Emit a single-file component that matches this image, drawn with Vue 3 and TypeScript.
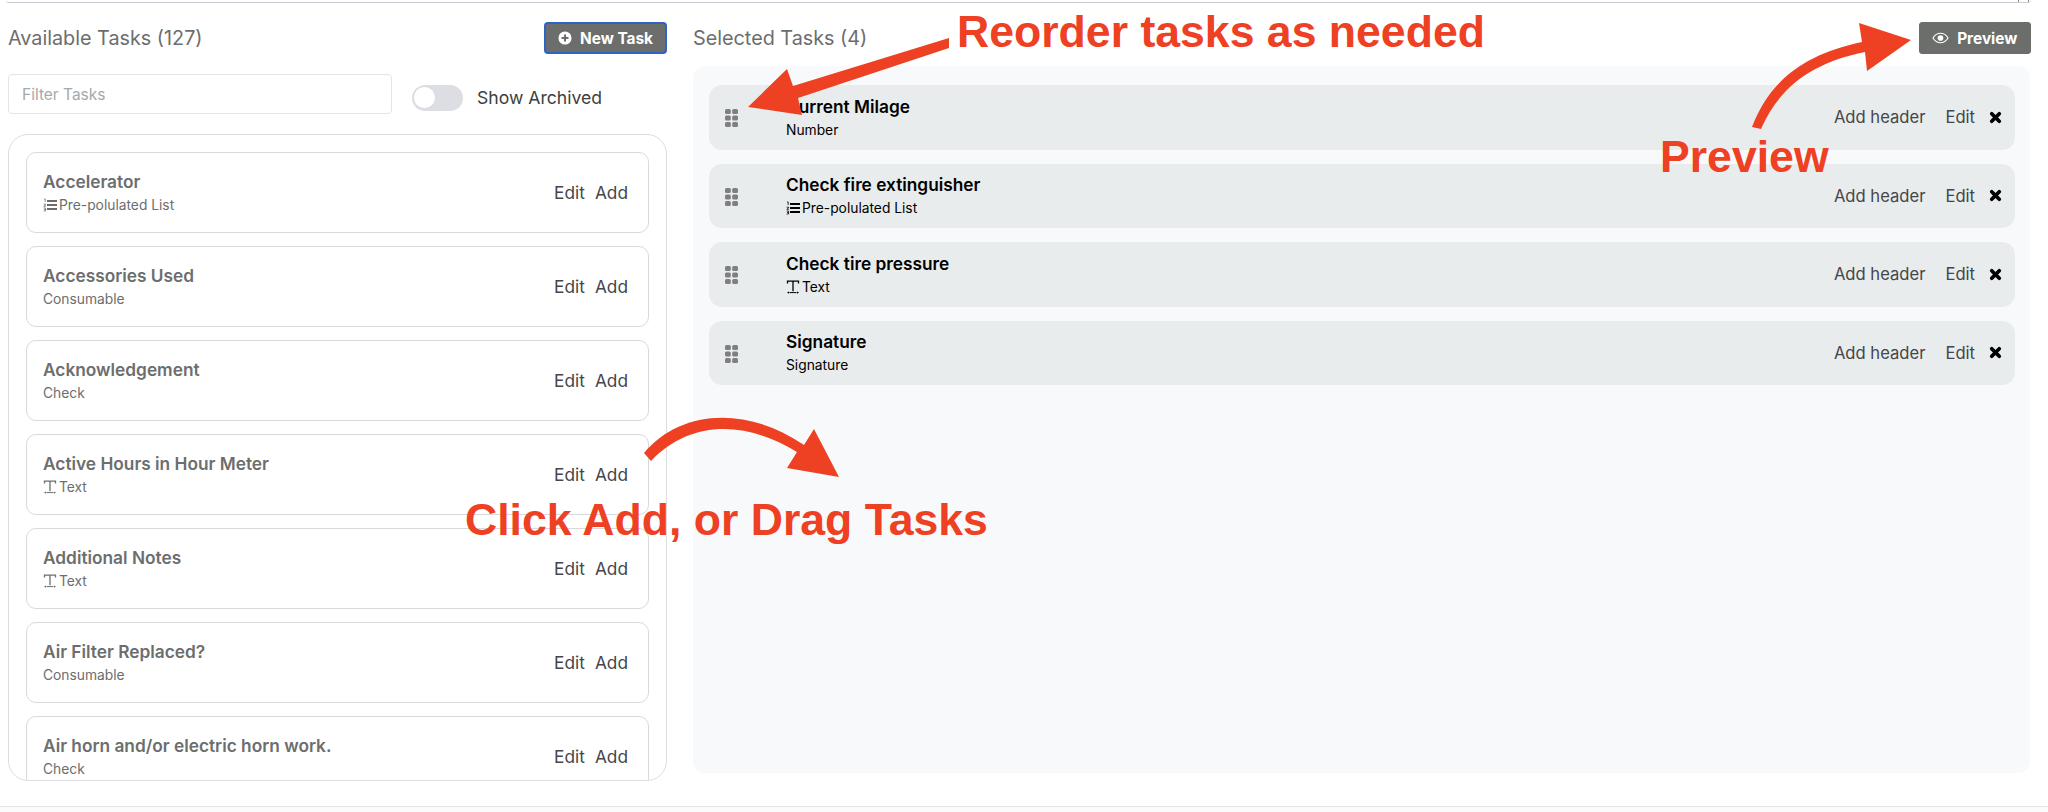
<script setup lang="ts">
interface Task { name: string; kind: string; icon?: 'list' | 'text' }

const available: Task[] = [
  { name: 'Accelerator', kind: 'Pre-polulated List', icon: 'list' },
  { name: 'Accessories Used', kind: 'Consumable' },
  { name: 'Acknowledgement', kind: 'Check' },
  { name: 'Active Hours in Hour Meter', kind: 'Text', icon: 'text' },
  { name: 'Additional Notes', kind: 'Text', icon: 'text' },
  { name: 'Air Filter Replaced?', kind: 'Consumable' },
  { name: 'Air horn and/or electric horn work.', kind: 'Check' }
]

const selected: Task[] = [
  { name: 'Current Milage', kind: 'Number' },
  { name: 'Check fire extinguisher', kind: 'Pre-polulated List', icon: 'list' },
  { name: 'Check tire pressure', kind: 'Text', icon: 'text' },
  { name: 'Signature', kind: 'Signature' }
]
</script>

<template>
  <div class="page">
    <div class="topline"><span class="topnub"></span></div>
    <div class="columns">
      <section class="left">
        <header class="head">
          <h2>Available Tasks (127)</h2>
          <button class="btn focus">
            <svg class="btn-ico" viewBox="0 0 16 16"><circle cx="8" cy="8" r="7.5" fill="#fff" /><path d="M8 4v8M4 8h8" stroke="#6c6e6c" stroke-width="2.4" /></svg>
            New Task
          </button>
        </header>
        <div class="filters">
          <input class="filter" placeholder="Filter Tasks" />
          <span class="toggle"><span class="knob"></span></span>
          <span class="archived">Show Archived</span>
        </div>
        <div class="list">
          <article v-for="t in available" :key="t.name" class="card">
            <div class="info">
              <div class="name">{{ t.name }}</div>
              <div class="kind">
                <svg v-if="t.icon === 'list'" class="kind-ico" viewBox="0 0 14 14"><path d="M4 3h10M4 7h10M4 11h10" stroke="currentColor" stroke-width="1.8" /><path d="M1 1h1.2v3M.6 6.2h2v.9l-1.8 1.2h2M.6 10h2v3H.6M1 11.5h1.6" stroke="currentColor" stroke-width=".8" fill="none" /></svg>
                <svg v-if="t.icon === 'text'" class="kind-ico" viewBox="0 0 14 14"><path d="M1.5 3.5V1.2h11v2.3M7 1.2v10" stroke="currentColor" stroke-width="1.3" fill="none" /><path d="M3.5 12.6h7" stroke="currentColor" stroke-width="1" /><path d="M1 12.6l2-1.2v2.4zM13 12.6l-2-1.2v2.4z" fill="currentColor" /></svg>
                {{ t.kind }}
              </div>
            </div>
            <div class="actions">
              <span>Edit</span>
              <span>Add</span>
            </div>
          </article>
        </div>
      </section>

      <section class="right">
        <header class="head">
          <h2>Selected Tasks (4)</h2>
          <button class="btn preview">
            <svg class="btn-ico eye" viewBox="0 0 18 12"><path d="M1 6c2-3.2 4.8-5 8-5s6 1.8 8 5c-2 3.2-4.8 5-8 5S3 9.2 1 6z" fill="none" stroke="#fff" stroke-width="1.2" /><circle cx="9" cy="6" r="3" fill="#fff" /></svg>
            Preview
          </button>
        </header>
        <div class="selected">
          <article v-for="t in selected" :key="t.name" class="row">
            <svg class="grip" viewBox="0 0 13 18"><g fill="#7d7f80"><rect x="0" y="0" width="5.8" height="5" rx="1.5" /><rect x="7.2" y="0" width="5.8" height="5" rx="1.5" /><rect x="0" y="6.5" width="5.8" height="5" rx="1.5" /><rect x="7.2" y="6.5" width="5.8" height="5" rx="1.5" /><rect x="0" y="13" width="5.8" height="5" rx="1.5" /><rect x="7.2" y="13" width="5.8" height="5" rx="1.5" /></g></svg>
            <div class="info">
              <div class="name">{{ t.name }}</div>
              <div class="kind">
                <svg v-if="t.icon === 'list'" class="kind-ico" viewBox="0 0 14 14"><path d="M4 3h10M4 7h10M4 11h10" stroke="currentColor" stroke-width="1.8" /><path d="M1 1h1.2v3M.6 6.2h2v.9l-1.8 1.2h2M.6 10h2v3H.6M1 11.5h1.6" stroke="currentColor" stroke-width=".8" fill="none" /></svg>
                <svg v-if="t.icon === 'text'" class="kind-ico" viewBox="0 0 14 14"><path d="M1.5 3.5V1.2h11v2.3M7 1.2v10" stroke="currentColor" stroke-width="1.3" fill="none" /><path d="M3.5 12.6h7" stroke="currentColor" stroke-width="1" /><path d="M1 12.6l2-1.2v2.4zM13 12.6l-2-1.2v2.4z" fill="currentColor" /></svg>
                {{ t.kind }}
              </div>
            </div>
            <div class="row-actions">
              <span>Add header</span>
              <span>Edit</span>
              <svg class="close" viewBox="0 0 12 12"><path d="M2.5 2.5l7 7M9.5 2.5l-7 7" stroke="#000" stroke-width="3.4" stroke-linecap="round" /></svg>
            </div>
          </article>
        </div>
      </section>
    </div>
    <div class="footer"></div>

    <svg class="arrows" viewBox="0 0 2048 812">
      <g fill="#ee4023">
        <path d="M949 38L949 48L798 98L802 115L748 107L787 69L793 86Z" />
        <path d="M1752 127C1770 80 1805 54 1862 42L1859 23L1911 40L1867 71L1865 52C1815 62 1780 85 1761 129Z" />
        <path d="M644 453C680 410 745 405 804 445L814 429L839 477L787 468L797 452C745 420 690 420 651 461Z" />
      </g>
    </svg>
    <span class="note note-reorder">Reorder tasks as needed</span>
    <span class="note note-preview">Preview</span>
    <span class="note note-click">Click Add, or Drag Tasks</span>
  </div>
</template>

<style>
html, body { margin: 0; background: #fff; }
</style>

<style scoped>
.page {
  position: relative;
  width: 2048px;
  height: 812px;
  overflow: hidden;
  display: flex;
  flex-direction: column;
  font-family: Inter, "Liberation Sans", sans-serif;
  background: #fff;
}
.topline {
  position: relative;
  height: 3px;
  margin: 0 17px 0 6px;
  border-bottom: 1.5px solid #c9cbd3;
  border-radius: 0 0 3px 3px;
  box-sizing: border-box;
}
.topnub {
  position: absolute;
  right: 2px;
  top: 0;
  width: 9px;
  height: 2px;
  border-left: 1px solid #888;
  border-right: 1px solid #888;
}
.columns {
  flex: 1;
  display: flex;
  padding: 19px 18px 0 8px;
  gap: 26px;
  min-height: 0;
}
.left { width: 659px; flex: none; display: flex; flex-direction: column; }
.right { flex: 1; min-width: 0; display: flex; flex-direction: column; }
.head {
  height: 32px;
  display: flex;
  align-items: center;
  justify-content: space-between;
}
h2 {
  margin: 0;
  font-size: 19.8px;
  font-weight: 400;
  color: #6c6e6e;
}
.btn {
  height: 32px;
  box-sizing: border-box;
  display: flex;
  align-items: center;
  justify-content: center;
  gap: 8px;
  border: 1px solid #6c6e6c;
  border-radius: 3px;
  background: #6c6e6c;
  color: #fff;
  font: 700 15.4px Inter, "Liberation Sans", sans-serif;
}
.focus { width: 123px; border: 2px solid #2e62c4; border-radius: 4px; }
.preview { width: 112.5px; margin-right: -1px; }
.btn-ico { width: 14px; height: 14px; }
.eye { width: 17px; height: 12px; }
.filters {
  display: flex;
  align-items: center;
  margin-top: 20px;
  height: 40px;
}
.filter {
  width: 384px;
  height: 40px;
  box-sizing: border-box;
  padding: 0 13px;
  border: 1px solid #e2e4ea;
  border-radius: 4px;
  font: 400 15.5px Inter, "Liberation Sans", sans-serif;
  outline: none;
}
.filter::placeholder { color: #a6a8ad; opacity: 1; }
.toggle {
  width: 51px;
  height: 26px;
  margin: 7px 0 0 20px;
  background: #dcdee3;
  border-radius: 13px;
  display: flex;
  align-items: center;
  padding-left: 2px;
  box-sizing: border-box;
}
.knob { width: 21px; height: 21px; border-radius: 50%; background: #fff; }
.archived {
  margin: 7px 0 0 14px;
  font-size: 17.6px;
  color: #3c3e40;
}
.list {
  margin-top: 20px;
  height: 647px;
  box-sizing: border-box;
  padding: 17px 17px 0;
  border: 1px solid #dcdde0;
  border-radius: 20px;
  overflow: hidden;
  display: flex;
  flex-direction: column;
  gap: 13px;
}
.card {
  flex: none;
  height: 81px;
  box-sizing: border-box;
  border: 1px solid #d8d9dc;
  border-radius: 10px;
  padding: 0 17px 0 16px;
  display: flex;
  align-items: center;
  justify-content: space-between;
}
.card .info { color: #6c6e6e; }
.info { display: flex; flex-direction: column; gap: 4px; }
.row .info { padding-top: 1px; }
.name { font-size: 17.3px; font-weight: 600; line-height: 20px; }
.kind {
  display: flex;
  align-items: center;
  gap: 2px;
  font-size: 13.8px;
  line-height: 18px;
}
.kind-ico { width: 14px; height: 14px; }
.actions { display: flex; gap: 10px; font-size: 17.3px; color: #44464a; padding-right: 3px; }
.selected {
  margin-top: 12px;
  height: 707px;
  box-sizing: border-box;
  padding: 19px 15px 0 16px;
  background: #f8f9fb;
  border-radius: 12px;
  display: flex;
  flex-direction: column;
  gap: 14px;
}
.row {
  flex: none;
  height: 64.5px;
  box-sizing: border-box;
  padding: 0 13px 0 16px;
  background: #e9ecec;
  border-radius: 13px;
  display: flex;
  align-items: center;
  color: #000;
}
.grip { width: 13px; height: 18px; margin: 2px 48px 0 0; }
.row-actions {
  margin-left: auto;
  display: flex;
  align-items: center;
  gap: 20px;
  font-size: 16.6px;
  color: #44464a;
}
.close { width: 13px; height: 13px; margin-left: -6px; }
.footer {
  height: 5px;
  background: #fbfbfc;
  border-top: 1.5px solid #e4e5e8;
}
.arrows {
  position: absolute;
  left: 0;
  top: 0;
  width: 2048px;
  height: 812px;
  pointer-events: none;
}
.note {
  position: absolute;
  font: 700 44.6px "Liberation Sans", Arial, sans-serif;
  color: #ee4023;
  line-height: 1;
  white-space: nowrap;
}
.note-reorder { left: 957px; top: 10px; }
.note-preview { left: 1660px; top: 135px; }
.note-click { left: 465px; top: 498px; }
</style>
